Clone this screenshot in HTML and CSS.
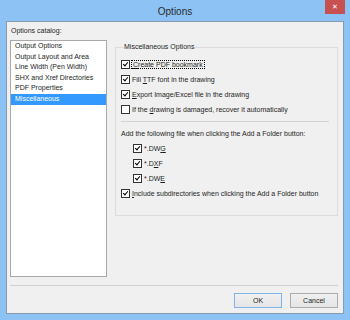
FILE: index.html
```html
<!DOCTYPE html>
<html lang="en">
<head>
    <meta charset="UTF-8">
    <title>Options</title>
    <link rel="stylesheet" href="styles.css">
</head>
<body>

<!-- Window frame -->
<div class="window">
    <div class="titlebar">
        <span class="title">Options</span>
        <button class="close-btn">&#x2715;</button>
    </div>

    <div class="client">
        <div class="main">
            <!-- Catalog -->
            <div class="catalog">
                <div class="catalog-label">Options catalog:</div>
                <ul class="catalog-list">
                    <li>Output Options</li>
                    <li>Output Layout and Area</li>
                    <li>Line Width (Pen Width)</li>
                    <li>SHX and Xref Directories</li>
                    <li>PDF Properties</li>
                    <li class="selected">Miscellaneous</li>
                </ul>
            </div>

            <!-- Page -->
            <fieldset class="group">
                <legend>Miscellaneous Options</legend>

                <label class="check"><span class="box on"></span><span class="focus"><u>C</u>reate PDF bookmark</span></label>
                <label class="check"><span class="box on"></span><span>Fill <u>T</u>TF font in the drawing</span></label>
                <label class="check"><span class="box on"></span><span><u>E</u>xport Image/Excel file in the drawing</span></label>
                <label class="check"><span class="box"></span><span>If the <u>d</u>rawing is damaged, recover it automatically</span></label>

                <div class="sep"></div>

                <div class="row-text">Add the following file when clicking the Add a Folder button:</div>
                <label class="check indent"><span class="box on"></span><span>*.DW<u>G</u></span></label>
                <label class="check indent"><span class="box on"></span><span>*.D<u>X</u>F</span></label>
                <label class="check indent"><span class="box on"></span><span>*.DW<u>E</u></span></label>
                <label class="check"><span class="box on"></span><span><u>I</u>nclude subdirectories when clicking the Add a Folder button</span></label>
            </fieldset>
        </div>

        <div class="footer">
            <div class="footer-line"></div>
            <div class="buttons">
                <button class="btn default">OK</button>
                <button class="btn">Cancel</button>
            </div>
        </div>
    </div>
</div>

</body>
</html>
```

FILE: styles.css
```css
:root {
    --frame: #8cc3f4;
    --face: #f0f0f0;
    --ui-font: 'Liberation Sans', Arial, sans-serif;
}

* {
    box-sizing: border-box;
}

body {
    margin: 0;
    font-family: var(--ui-font);
    font-size: 7px;
    color: #1e1e1e;
}

.window {
    width: 350px;
    height: 320px;
    background-color: var(--frame);
    display: flex;
    flex-direction: column;
}

/* Title bar */
.titlebar {
    height: 21px;
    display: flex;
    align-items: center;
    justify-content: center;
    position: relative;
}

.title {
    font-size: 10px;
    color: #2b2b2b;
    margin-top: 1px;
}

.close-btn {
    position: absolute;
    top: 0;
    right: 5px;
    width: 20px;
    height: 14px;
    border: none;
    padding: 0;
    background-color: #c75050;
    color: #fff;
    font-family: 'DejaVu Sans', sans-serif;
    font-size: 7px;
    font-weight: bold;
    line-height: 14px;
}

/* Client area */
.client {
    flex: 1;
    margin: 0 6px 6px 6px;
    background-color: var(--face);
    border: 1px solid #8a9bab;
    display: flex;
    flex-direction: column;
}

.main {
    display: flex;
    padding: 4px 5px 0 3px;
    height: 255px;
}

.catalog {
    width: 97px;
    display: flex;
    flex-direction: column;
}

.catalog-label {
    line-height: 10px;
    margin-bottom: 4px;
    padding-left: 1px;
}

.catalog-list {
    list-style: none;
    margin: 0;
    padding: 0;
    height: 237px;
    background-color: #fff;
    border: 1px solid #a9a9a9;
}

.catalog-list li {
    height: 10.6px;
    line-height: 10.6px;
    padding-left: 4px;
    white-space: nowrap;
}

.catalog-list li.selected {
    background-color: #3399ff;
    color: #fff;
}

/* Group box */
.group {
    margin: 16px 0 0 8px;
    padding: 5px 0 0 5px;
    flex: 1;
    height: 174px;
    border: 1px solid #dcdcdc;
    min-width: 0;
}

.group legend {
    padding: 0 1px;
    margin-left: 2px;
    line-height: 10px;
}

.check {
    display: flex;
    align-items: center;
    height: 15px;
    white-space: nowrap;
}

.check.indent {
    padding-left: 12px;
}

.box {
    width: 9px;
    height: 9px;
    border: 1px solid #333;
    background-color: #fff;
    margin-right: 2px;
    flex-shrink: 0;
    position: relative;
}

.box.on::after {
    content: "";
    position: absolute;
    left: 2px;
    top: 0px;
    width: 2px;
    height: 4px;
    border-right: 1.6px solid #000;
    border-bottom: 1.6px solid #000;
    transform: rotate(40deg);
}

.focus {
    outline: 1px dotted #000;
    padding: 0 1px;
}

u {
    text-decoration: underline;
    text-underline-offset: 1px;
}

.sep {
    height: 1px;
    background-color: #d4d4d4;
    margin: 4px 8px 4px 0;
}

.row-text {
    height: 15px;
    line-height: 15px;
    white-space: nowrap;
}

/* Footer */
.footer {
    padding: 8px 5px 5px 3px;
}

.footer-line {
    height: 1px;
    background-color: #d0d0d0;
}

.buttons {
    display: flex;
    justify-content: flex-end;
    gap: 8px;
    margin-top: 7px;
}

.btn {
    width: 48px;
    height: 15px;
    padding: 0;
    font-family: var(--ui-font);
    font-size: 7px;
    color: #1e1e1e;
    background: linear-gradient(#f0f0f0, #e5e5e5);
    border: 1px solid #acacac;
}

.btn.default {
    border-color: #7eb4ea;
}
```
